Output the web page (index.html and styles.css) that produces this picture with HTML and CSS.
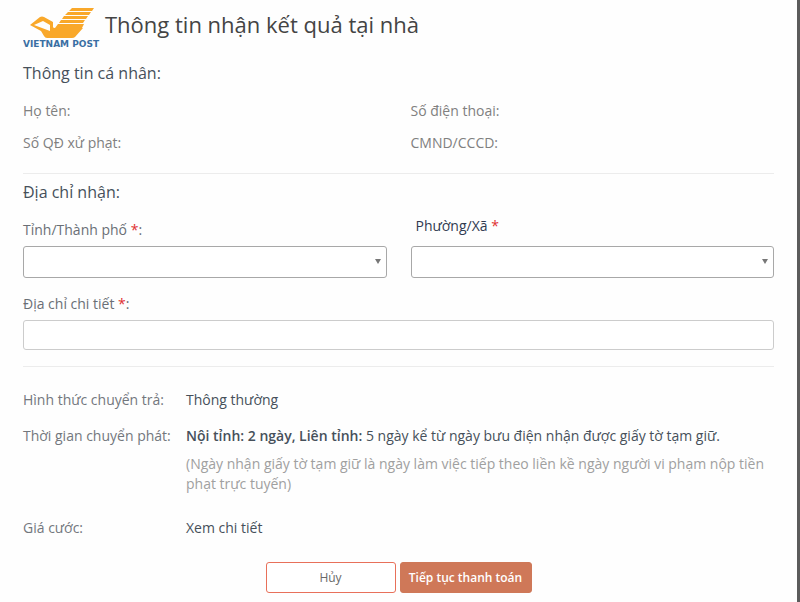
FILE: index.html
```html
<!DOCTYPE html>
<html lang="vi">
<head>
    <meta charset="UTF-8">
    <meta name="viewport" content="width=device-width, initial-scale=1.0">
    <title>Thông tin nhận kết quả tại nhà</title>
    <link rel="stylesheet" href="styles.css">
</head>
<body>
    <main class="dialog">
        <header class="header">
            <svg class="logo" width="80" height="42" viewBox="0 0 80 42" role="img" aria-label="Vietnam Post">
                <path fill="#f9a82a" fill-rule="evenodd" d="M7 18 L17 10 Q19 9 21 10 L30 15 L30 20 Q30 21 32 21 L60 21 L52 30 Q51 31 49 31 L24 31 Q22 31 21 29 L18 24 Z M11 18 L27 24 L27 18 L20 14 Z"/>
                <path fill="#f9a82a" d="M49 1 H71 L69 4 H46 Z M45 5 H68 L66 8 H42 Z M41 9 H65 L63 12 H39 Z M38 13 H62 L60 16 H36 Z M35 17 H61 L59 21 H32 Z"/>
                <text class="logo-text" x="0" y="40">VIETNAM POST</text>
            </svg>
            <h1>Thông tin nhận kết quả tại nhà</h1>
        </header>

        <form>
            <!-- Personal info -->
            <section class="section personal">
                <h2>Thông tin cá nhân:</h2>
                <div class="columns">
                    <div class="info">Họ tên:</div>
                    <div class="info">Số điện thoại:</div>
                    <div class="info">Số QĐ xử phạt:</div>
                    <div class="info">CMND/CCCD:</div>
                </div>
            </section>

            <!-- Delivery address -->
            <section class="section address">
                <h2>Địa chỉ nhận:</h2>
                <div class="columns fields">
                    <div class="form-group">
                        <label for="province">Tỉnh/Thành phố <span class="required">*</span>:</label>
                        <div class="select-box">
                            <select id="province" name="province" required>
                                <option value=""></option>
                            </select>
                        </div>
                    </div>
                    <div class="form-group">
                        <label class="ward-label" for="ward">Phường/Xã <span class="required">*</span></label>
                        <div class="select-box">
                            <select id="ward" name="ward" required>
                                <option value=""></option>
                            </select>
                        </div>
                    </div>
                </div>
                <div class="form-group">
                    <label for="detail">Địa chỉ chi tiết <span class="required">*</span>:</label>
                    <input type="text" id="detail" name="detail" required>
                </div>
            </section>

            <!-- Delivery method -->
            <dl class="delivery">
                <dt>Hình thức chuyển trả:</dt>
                <dd>Thông thường</dd>
                <dt>Thời gian chuyển phát:</dt>
                <dd>
                    <p><b>Nội tỉnh: 2 ngày, Liên tỉnh:</b> 5 ngày kể từ ngày bưu điện nhận được giấy tờ tạm giữ.</p>
                    <p class="note">(Ngày nhận giấy tờ tạm giữ là ngày làm việc tiếp theo liền kề ngày người vi phạm nộp tiền phạt trực tuyến)</p>
                </dd>
                <dt>Giá cước:</dt>
                <dd><a href="#">Xem chi tiết</a></dd>
            </dl>

            <div class="buttons">
                <button type="button" class="cancel">Hủy</button>
                <button type="submit" class="submit">Tiếp tục thanh toán</button>
            </div>
        </form>
    </main>
</body>
</html>
```
FILE: styles.css
```css
* {
    box-sizing: border-box;
}

body {
    margin: 0;
    background-color: #fefefe;
    font-family: "Open Sans", "Noto Sans", sans-serif;
    font-size: 14px;
    line-height: 20px;
    color: #46505a;
}

.dialog {
    min-height: 100vh;
    padding: 7px 23px 8px;
    border-right: 3px solid #5c5c5c;
}

.header {
    display: flex;
    gap: 2px;
}

.logo {
    flex: none;
}

.logo-text {
    font-family: "DejaVu Sans", sans-serif;
    font-size: 9px;
    font-weight: bold;
    fill: #3a6fa3;
}

h1,
h2,
p,
dl,
dd {
    margin: 0;
}

h1 {
    font-size: 22px;
    font-weight: normal;
    line-height: 34px;
    color: #444;
}

h2 {
    font-size: 16px;
    font-weight: normal;
    line-height: 24px;
}

.section {
    border-bottom: 1px solid #ececec;
}

.personal {
    padding: 12px 0 20px;
}

.address {
    padding: 6px 0 16px;
}

.columns {
    display: grid;
    grid-template-columns: 1fr 1fr;
    gap: 12px 24px;
}

.personal .columns {
    margin-top: 16px;
}

.fields {
    margin: 12px 0;
}

.info {
    color: #808080;
}

.form-group {
    display: flex;
    flex-direction: column;
    justify-content: space-between;
    gap: 6px;
}

.form-group label {
    padding-top: 4px;
    color: #6a6f76;
}

.form-group .ward-label {
    padding: 0 5px;
    color: #303a50;
}

.required {
    color: #e03030;
}

.select-box {
    position: relative;
}

/* Dropdown arrow */
.select-box::after {
    content: "";
    position: absolute;
    top: 13px;
    right: 6px;
    border: 3px solid transparent;
    border-top: 5px solid #777;
    border-bottom: 0;
    pointer-events: none;
}

select,
input {
    display: block;
    width: 100%;
    padding: 0 8px;
    border-radius: 3px;
    background-color: #fff;
    font: inherit;
    color: inherit;
}

select {
    appearance: none;
    height: 32px;
    border: 1px solid #a8a8a8;
}

input {
    height: 30px;
    border: 1px solid #ccc;
}

.delivery {
    display: grid;
    grid-template-columns: 155px 1fr;
    gap: 16px 8px;
    padding-top: 23px;
}

dt {
    color: #73777d;
}

b {
    font-weight: 600;
}

.note {
    margin: 8px 0;
    color: #a0a0a0;
}

.delivery a {
    color: inherit;
    text-decoration: none;
}

.buttons {
    display: flex;
    justify-content: center;
    gap: 4px;
    margin-top: 24px;
}

button {
    height: 31px;
    padding: 0;
    border: 1px solid #cf7858;
    border-radius: 3px;
    font-family: inherit;
    font-size: 12px;
    cursor: pointer;
}

.cancel {
    width: 130px;
    border-color: #e8705a;
    background-color: #fff;
    color: #686868;
}

.submit {
    width: 132px;
    background-color: #cf7858;
    font-weight: 600;
    color: #fff;
}
```
